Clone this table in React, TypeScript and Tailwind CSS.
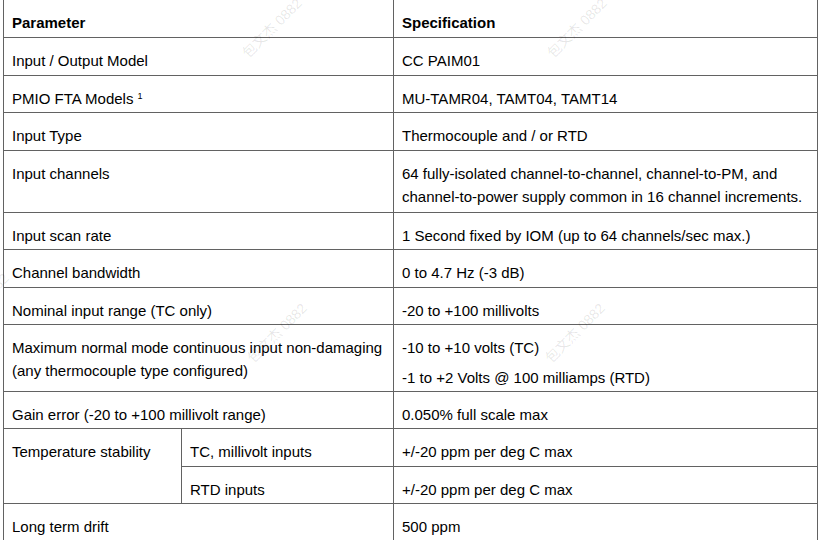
const font = { fontFamily: '"Liberation Sans", Arial, sans-serif' };

type Row = { param: string; sup?: string; spec: string[] };

function Cell({ children, className = "" }: { children: React.ReactNode; className?: string }) {
  return <div className={`bg-white px-[8px] pt-[10.5px] leading-[23px] ${className}`}>{children}</div>;
}

function Watermark({ className }: { className: string }) {
  return (
    <span
      className={`pointer-events-none absolute origin-left -rotate-45 whitespace-nowrap text-[14px] text-black/10 ${className}`}
      style={{ fontFamily: '"Liberation Sans", "Noto Sans CJK SC", sans-serif' }}
    >
      包文杰 0882
    </span>
  );
}

export default function App() {
  const top: Row[] = [
    { param: "Input / Output Model", spec: ["CC PAIM01"] },
    { param: "PMIO FTA Models", sup: "1", spec: ["MU-TAMR04, TAMT04, TAMT14"] },
    { param: "Input Type", spec: ["Thermocouple and / or RTD"] },
  ];

  return (
    <div className="relative h-[540px] w-[819px] overflow-hidden bg-white text-[15px] text-black" style={font}>
      <div className="ml-[3px] -mt-px grid w-[815px] grid-cols-[177px_211px_423px] grid-rows-[37px_37px_36px_37px_61px_36px_37px_36px_66px_36px_37px_36px_37px] gap-px bg-[#626262] p-px">
        <Cell className="col-span-2 bg-[#d9d9d9] font-bold">Parameter</Cell>
        <Cell className="bg-[#d9d9d9] font-bold">Specification</Cell>

        {top.map((r) => (
          <>
            <Cell key={r.param} className="col-span-2">
              {r.param}
              {r.sup && <sup className="ml-[4px] text-[9px]">{r.sup}</sup>}
            </Cell>
            <Cell key={r.param + "s"}>{r.spec[0]}</Cell>
          </>
        ))}

        <Cell className="col-span-2">Input channels</Cell>
        <Cell>
          64 fully-isolated channel-to-channel, channel-to-PM, and
          <br />
          channel-to-power supply common in 16 channel increments.
        </Cell>

        <Cell className="col-span-2">Input scan rate</Cell>
        <Cell>1 Second fixed by IOM (up to 64 channels/sec max.)</Cell>

        <Cell className="col-span-2">Channel bandwidth</Cell>
        <Cell>0 to 4.7 Hz (-3 dB)</Cell>

        <Cell className="col-span-2">Nominal input range (TC only)</Cell>
        <Cell>-20 to +100 millivolts</Cell>

        <Cell className="col-span-2">
          Maximum normal mode continuous input non-damaging
          <br />
          (any thermocouple type configured)
        </Cell>
        <Cell>
          <p>-10 to +10 volts (TC)</p>
          <p className="mt-[7px]">-1 to +2 Volts @ 100 milliamps (RTD)</p>
        </Cell>

        <Cell className="col-span-2">Gain error (-20 to +100 millivolt range)</Cell>
        <Cell>0.050% full scale max</Cell>

        <Cell className="row-span-2">Temperature stability</Cell>
        <Cell>TC, millivolt inputs</Cell>
        <Cell>+/-20 ppm per deg C max</Cell>
        <Cell>RTD inputs</Cell>
        <Cell>+/-20 ppm per deg C max</Cell>

        <Cell className="col-span-2">Long term drift</Cell>
        <Cell>500 ppm</Cell>
      </div>

      <Watermark className="left-[245px] top-[45px]" />
      <Watermark className="left-[550px] top-[45px]" />
      <Watermark className="left-[250px] top-[350px]" />
      <Watermark className="left-[548px] top-[350px]" />
      <Watermark className="left-[-48px] top-[320px]" />
    </div>
  );
}
